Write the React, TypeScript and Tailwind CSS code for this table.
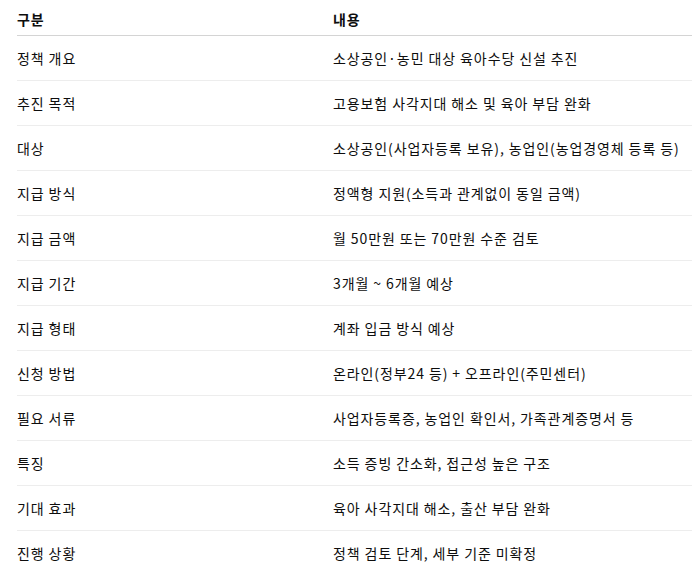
import React from 'react';

const rows: [string, string][] = [
  ['정책 개요', '소상공인·농민 대상 육아수당 신설 추진'],
  ['추진 목적', '고용보험 사각지대 해소 및 육아 부담 완화'],
  ['대상', '소상공인(사업자등록 보유), 농업인(농업경영체 등록 등)'],
  ['지급 방식', '정액형 지원(소득과 관계없이 동일 금액)'],
  ['지급 금액', '월 50만원 또는 70만원 수준 검토'],
  ['지급 기간', '3개월 ~ 6개월 예상'],
  ['지급 형태', '계좌 입금 방식 예상'],
  ['신청 방법', '온라인(정부24 등) + 오프라인(주민센터)'],
  ['필요 서류', '사업자등록증, 농업인 확인서, 가족관계증명서 등'],
  ['특징', '소득 증빙 간소화, 접근성 높은 구조'],
  ['기대 효과', '육아 사각지대 해소, 출산 부담 완화'],
  ['진행 상황', '정책 검토 단계, 세부 기준 미확정'],
];

export default function App() {
  return (
    <div className="w-[692px] h-[576px] overflow-hidden bg-white pl-[17px] font-['Noto_Sans_CJK_KR',sans-serif] text-[14px] leading-5 tracking-[0.9px] text-[#0d0d0d]">
      {/* 헤더 */}
      <div className="grid grid-cols-[316px_1fr] border-b border-[#d4d4d4] pt-[9px] pb-[6px] font-bold">
        <div>구분</div>
        <div>내용</div>
      </div>
      {rows.map(([k, v], i) => (
        <div
          key={k}
          className={`grid grid-cols-[316px_1fr] py-3 ${i < rows.length - 1 ? 'border-b border-[#ededed]' : ''}`}
        >
          <div>{k}</div>
          <div className="whitespace-nowrap">{v}</div>
        </div>
      ))}
    </div>
  );
}
